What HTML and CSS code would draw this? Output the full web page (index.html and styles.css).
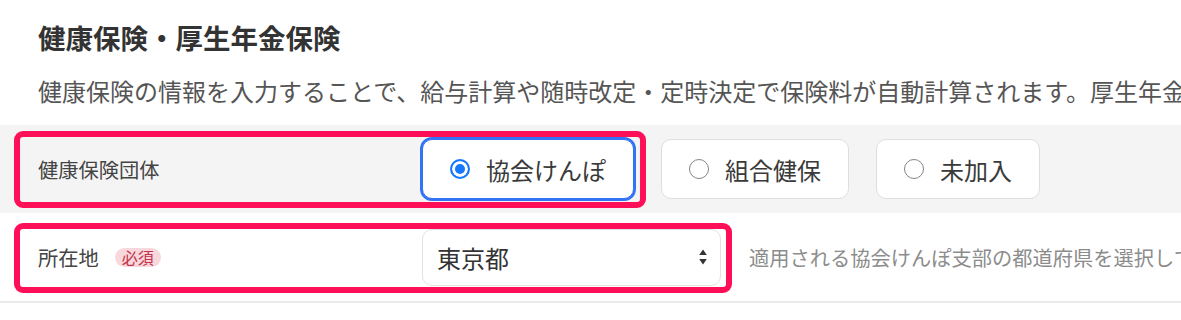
FILE: index.html
```html
<!DOCTYPE html>
<html lang="ja">
<head>
<meta charset="utf-8">
<title>健康保険・厚生年金保険</title>
<link rel="stylesheet" href="styles.css">
</head>
<body>
<div class="page">
  <header class="intro">
    <h1 class="title">健康保険・厚生年金保険</h1>
    <p class="desc">健康保険の情報を入力することで、給与計算や随時改定・定時決定で保険料が自動計算されます。厚生年金保険の情報も同様に入力してください。</p>
  </header>

  <div class="row row-shaded">
    <div class="label">健康保険団体</div>
    <div class="controls">
      <div class="radio selected"><span class="dot"></span><span>協会けんぽ</span></div>
      <div class="radio"><span class="dot"></span><span>組合健保</span></div>
      <div class="radio"><span class="dot"></span><span>未加入</span></div>
    </div>
    <div class="mark mark-1"></div>
  </div>

  <div class="row row-line">
    <div class="label">所在地<span class="badge">必須</span></div>
    <div class="controls">
      <div class="select">
        <span>東京都</span>
        <svg class="arrows" width="8" height="16" viewBox="0 0 8 16"><path d="M4 0.5 L7.8 6 L0.2 6 Z" fill="#333"/><path d="M0.2 10 L7.8 10 L4 15.5 Z" fill="#333"/></svg>
      </div>
      <div class="hint">適用される協会けんぽ支部の都道府県を選択してください</div>
    </div>
    <div class="mark mark-2"></div>
  </div>
</div>
</body>
</html>
```

FILE: styles.css
```css
html, body {
  margin: 0;
  padding: 0;
  background: #ffffff;
}

body {
  font-family: "Noto Sans CJK JP", "Noto Sans", sans-serif;
  color: #333333;
}

.page {
  width: 1181px;
  overflow: hidden;
}

.intro {
  padding: 17px 38px 16px;
}

.title {
  margin: 0;
  font-size: 27.5px;
  line-height: 40px;
  font-weight: 700;
  color: #333333;
  white-space: nowrap;
}

.desc {
  margin: 16px 0 0;
  font-size: 24px;
  line-height: 36px;
  color: #555555;
  white-space: nowrap;
}

.row {
  position: relative;
  display: flex;
  align-items: center;
  height: 88px;
  padding-left: 38px;
  box-sizing: border-box;
}

.row-shaded {
  background: #f5f4f5;
}

.row-line {
  height: 90px;
  border-bottom: 2px solid #ebebeb;
}

.label {
  width: 384px;
  flex: none;
  display: flex;
  align-items: center;
  font-size: 20.25px;
  color: #444444;
  white-space: nowrap;
}

.badge {
  margin-left: 16px;
  padding: 0 7px;
  height: 19px;
  line-height: 19px;
  border-radius: 10px;
  background: #f8d8dc;
  color: #c3354d;
  font-size: 16px;
}

.controls {
  display: flex;
  align-items: center;
  gap: 27px;
  white-space: nowrap;
}

.radio {
  display: flex;
  align-items: center;
  gap: 16px;
  height: 60px;
  padding: 0 27px;
  box-sizing: border-box;
  border: 1px solid #dedede;
  border-radius: 10px;
  background: #ffffff;
  font-size: 24px;
  color: #3a3a3a;
}

.radio.selected {
  border-color: #3272f5;
  box-shadow: 0 0 0 2px #3272f5;
}

.dot {
  width: 20px;
  height: 20px;
  box-sizing: border-box;
  border: 1.5px solid #858585;
  border-radius: 50%;
  background: #ffffff;
  flex: none;
}

.radio.selected .dot {
  border: 2px solid #1677ff;
  background: #1677ff;
  box-shadow: inset 0 0 0 3px #ffffff;
}

.select {
  display: flex;
  align-items: center;
  justify-content: space-between;
  width: 299px;
  height: 57px;
  padding: 0 13px 0 14px;
  box-sizing: border-box;
  border: 1px solid #e2e2e2;
  border-radius: 10px;
  background: #ffffff;
  font-size: 24px;
  color: #333333;
}

.arrows {
  display: block;
}

.hint {
  margin-left: 1px;
  font-size: 20.25px;
  color: #8c8c8c;
}

.mark {
  position: absolute;
  left: 14px;
  box-sizing: border-box;
  border: 6px solid #ff0f57;
  border-radius: 9px;
  pointer-events: none;
}

.mark-1 {
  top: 6px;
  width: 632px;
  height: 77px;
}

.mark-2 {
  top: 10px;
  width: 718px;
  height: 70px;
}
```
